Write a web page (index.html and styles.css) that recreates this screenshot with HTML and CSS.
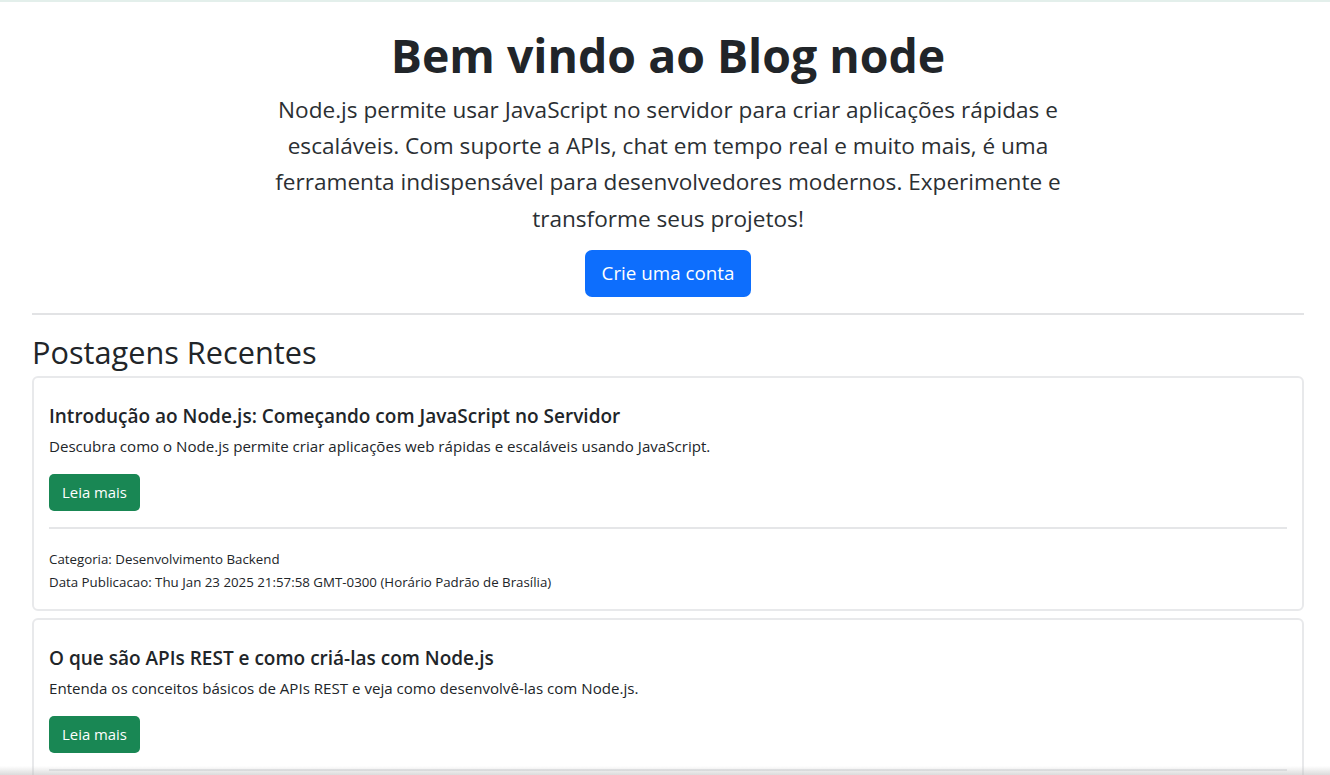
FILE: index.html
```html
<!DOCTYPE html>
<html lang="pt-BR">
<head>
<meta charset="utf-8">
<title>Blog node</title>
<link rel="stylesheet" href="styles.css">
</head>
<body>
<main class="page">
  <header class="hero">
    <h1 class="hero-title">Bem vindo ao Blog node</h1>
    <p class="lead">Node.js permite usar JavaScript no servidor para criar aplicações rápidas e escaláveis. Com suporte a APIs, chat em tempo real e muito mais, é uma ferramenta indispensável para desenvolvedores modernos. Experimente e transforme seus projetos!</p>
    <a class="btn btn-primary" href="#">Crie uma conta</a>
  </header>
  <hr class="divider">
  <h2 class="section-title">Postagens Recentes</h2>
  <div class="post-list">
    <article class="card">
      <div class="card-body">
        <h5 class="card-title">Introdução ao Node.js: Começando com JavaScript no Servidor</h5>
        <p class="card-text">Descubra como o Node.js permite criar aplicações web rápidas e escaláveis usando JavaScript.</p>
        <a class="btn btn-success" href="#">Leia mais</a>
        <hr class="card-divider">
        <p class="meta">Categoria: Desenvolvimento Backend</p>
        <p class="meta">Data Publicacao: Thu Jan 23 2025 21:57:58 GMT-0300 (Horário Padrão de Brasília)</p>
      </div>
    </article>
    <article class="card">
      <div class="card-body">
        <h5 class="card-title">O que são APIs REST e como criá-las com Node.js</h5>
        <p class="card-text">Entenda os conceitos básicos de APIs REST e veja como desenvolvê-las com Node.js.</p>
        <a class="btn btn-success" href="#">Leia mais</a>
        <hr class="card-divider">
        <p class="meta">Categoria: Desenvolvimento Backend</p>
        <p class="meta">Data Publicacao: Thu Jan 23 2025 21:57:58 GMT-0300 (Horário Padrão de Brasília)</p>
      </div>
    </article>
  </div>
</main>
<div class="bottom-shade"></div>
</body>
</html>
```
FILE: styles.css
```css
html, body {
  margin: 0;
  padding: 0;
  background: #ffffff;
}
body {
  font-family: "Open Sans", "Noto Sans", sans-serif;
  color: #212529;
  border-top: 2px solid #e3efeb;
  overflow: hidden;
}
.page {
  padding: 0 26px 0 32px;
}
.hero {
  display: flex;
  flex-direction: column;
  align-items: center;
  text-align: center;
  padding-top: 25px;
}
.hero-title {
  margin: 0;
  font-size: 46.4px;
  line-height: 56px;
  font-weight: 700;
  color: #212529;
}
.lead {
  margin: 9px 0 13px;
  max-width: 810px;
  font-size: 22.6px;
  line-height: 36.2px;
  font-weight: 400;
  color: #2b2f33;
}
.btn {
  display: inline-flex;
  align-items: center;
  justify-content: center;
  text-decoration: none;
  color: #fff;
  border-radius: 7px;
}
.btn-primary {
  background: #0d6efd;
  height: 47px;
  padding: 0 16.5px;
  font-size: 18.8px;
}
.btn-success {
  background: #198754;
  height: 37px;
  padding: 0 13px;
  font-size: 14.9px;
  border-radius: 5px;
}
.divider {
  border: 0;
  border-top: 2px solid #e2e3e5;
  margin: 16px 0 0;
}
.section-title {
  margin: 18px 0 5px;
  font-size: 30.7px;
  line-height: 38px;
  font-weight: 500;
}
.post-list {
  display: flex;
  flex-direction: column;
  gap: 7px;
}
.card {
  border: 2px solid #e8e9eb;
  border-radius: 6px;
}
.card-body {
  padding: 24px 15px 14px;
}
.card-title {
  margin: 0;
  font-size: 19px;
  line-height: 28px;
  font-weight: 600;
}
.card-text {
  margin: 6px 0 17px;
  font-size: 15.1px;
  line-height: 21px;
}
.card-divider {
  border: 0;
  border-top: 2px solid #e5e6e8;
  margin: 16px 0 20px;
}
.meta {
  margin: 0 0 3px;
  font-size: 13.3px;
  line-height: 20px;
}
.bottom-shade {
  position: fixed;
  left: 0;
  right: 0;
  bottom: 0;
  height: 9px;
  background: linear-gradient(to bottom, rgba(200,200,200,0), rgba(190,190,190,0.55));
}
```
